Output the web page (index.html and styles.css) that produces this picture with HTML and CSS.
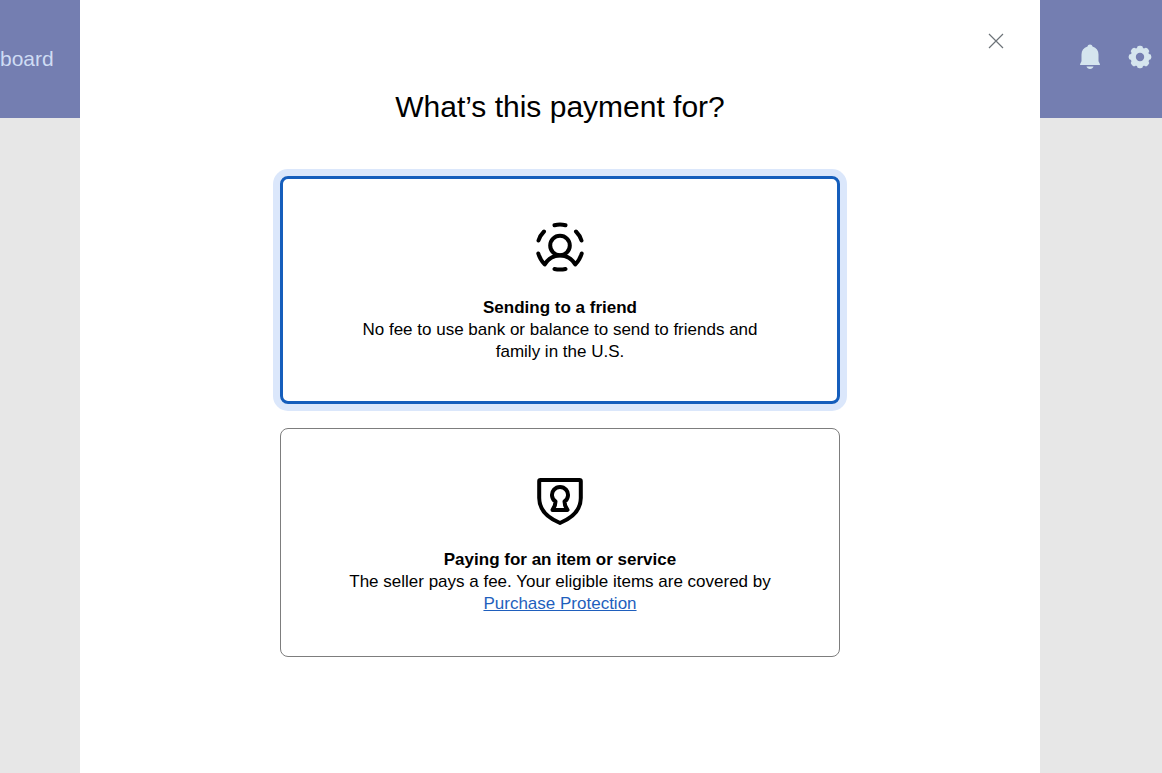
FILE: index.html
```html
<!DOCTYPE html>
<html lang="en">
<head>
<meta charset="utf-8">
<title>What’s this payment for?</title>
<link rel="stylesheet" href="styles.css">
</head>
<body>
<header class="topbar">
  <a class="nav-link" href="#">board</a>
  <div class="tools">
    <button class="tool" type="button" aria-label="Notifications">
      <svg width="24" height="28" viewBox="0 0 24 28" fill="currentColor"><path d="M12 1.500c1.400 0 2.300.8 2.500 2.100 4 1.200 6 4 6 8v6.400c0 1.300 1.500 1.800 1.500 4H2c0-2.200 1.500-2.700 1.500-4v-6.400c0-4 2-6.800 6-8 .2-1.300 1.100-2.100 2.500-2.100z"/><path d="M8.500 23.500h7c-.5 1.500-1.700 2.400-3.500 2.400s-3-.9-3.500-2.400z"/></svg>
    </button>
    <button class="tool" type="button" aria-label="Settings">
      <svg width="24" height="24" viewBox="-12 -12 24 24"><g fill="currentColor"><circle r="9.500"/><rect x="-3" y="-11.300" width="6" height="22.600" rx="2.400"/><rect x="-3" y="-11.300" width="6" height="22.600" rx="2.400" transform="rotate(45)"/><rect x="-3" y="-11.300" width="6" height="22.600" rx="2.400" transform="rotate(90)"/><rect x="-3" y="-11.300" width="6" height="22.600" rx="2.400" transform="rotate(135)"/></g><circle class="gear-hole" r="4.200"/></svg>
    </button>
  </div>
</header>
<main class="dialog" role="dialog" aria-labelledby="title">
  <button class="close" type="button" aria-label="Close">
    <svg width="16" height="16" viewBox="0 0 16 16" fill="none" stroke="currentColor" stroke-width="1.200"><path d="M1 1l14 14M15 1L1 15"/></svg>
  </button>
  <h1 class="title" id="title">What’s this payment for?</h1>
  <form class="options">
    <label class="option">
      <input class="option-radio" type="radio" name="purpose" value="friend" checked>
      <svg class="option-icon" width="52" height="52" viewBox="0 0 52 52" fill="none" stroke="currentColor" stroke-width="4" stroke-linecap="round" stroke-linejoin="round"><circle cx="26" cy="24.500" r="9.800"/><path d="M20.500 4.300Q26 2.900 31.500 4.300M20.500 48Q26 49.200 31.500 48M10 10.500Q6 14.500 4.500 19.500M42 10.500Q46 14.500 47.500 19.500M4.300 32.500Q6 38.500 10.700 43.500Q16 34.500 26 34.500Q36 34.500 41.300 43.500Q46 38.500 47.700 32.500"/></svg>
      <span class="option-name">Sending to a friend</span>
      <span class="option-text">No fee to use bank or balance to send to friends and family in the U.S.</span>
    </label>
    <label class="option">
      <input class="option-radio" type="radio" name="purpose" value="goods">
      <svg class="option-icon" width="52" height="52" viewBox="0 0 52 52" fill="none" stroke="currentColor" stroke-width="4" stroke-linecap="round" stroke-linejoin="round"><path d="M6.500 7h39q1.300 0 1.300 1.300V25c0 11-7.500 19.500-20.800 25C12.700 44.500 5.200 36 5.200 25V8.300Q5.200 7 6.500 7z"/><path d="M21.500 28.500a8 8 0 1 1 9 0c0 3 1.200 6 3 8.500h-15c1.800-2.500 3-5.500 3-8.500z"/></svg>
      <span class="option-name">Paying for an item or service</span>
      <span class="option-text">The seller pays a fee. Your eligible items are covered by <a class="link" href="#">Purchase Protection</a></span>
    </label>
  </form>
</main>
</body>
</html>
```
FILE: styles.css
```css
* { box-sizing: border-box; }

body {
  margin: 0;
  min-height: 100vh;
  background: #e7e7e7;
  color: #000;
  font-family: "Liberation Sans", Arial, sans-serif;
}

button {
  display: flex;
  padding: 0;
  border: 0;
  background: none;
  color: inherit;
}

.topbar {
  display: flex;
  justify-content: space-between;
  align-items: center;
  height: 118px;
  padding: 0 10px 4px 0;
  background: #747eb1;
  color: #d5e5ee;
}

.nav-link {
  padding-top: 4px;
  color: #cfdcf4;
  font-size: 21px;
  line-height: 24px;
  text-decoration: none;
}

.tools {
  display: flex;
  align-items: center;
  gap: 26px;
}

.gear-hole { fill: #747eb1; }

.dialog {
  position: absolute;
  inset: 0 122px 0 80px;
  display: flex;
  flex-direction: column;
  padding: 33px 36px;
  background: #fff;
}

.close {
  align-self: flex-end;
  color: #6c7378;
}

.title {
  margin: 40px 0 51px;
  font-size: 30px;
  font-weight: 400;
  line-height: 36px;
  text-align: center;
}

.options {
  display: flex;
  flex-direction: column;
  align-self: center;
  gap: 24px;
  width: 100%;
  max-width: 560px;
}

.option {
  display: flex;
  flex-direction: column;
  align-items: center;
  padding: 44px 60px 41px;
  border: 1px solid #7d7d7d;
  border-radius: 8px;
  font-size: 17px;
  line-height: 22px;
  text-align: center;
}

.option:has(:checked) {
  padding: 42px 58px 38px;
  border: 3px solid #155ebc;
  box-shadow: 0 0 0 7px #dbe7fb;
}

.option-radio {
  position: absolute;
  opacity: 0;
}

.option-icon { margin-bottom: 23px; }

.option-name {
  font-weight: 700;
  line-height: 23px;
}

.link { color: #1f5fbd; }
```
